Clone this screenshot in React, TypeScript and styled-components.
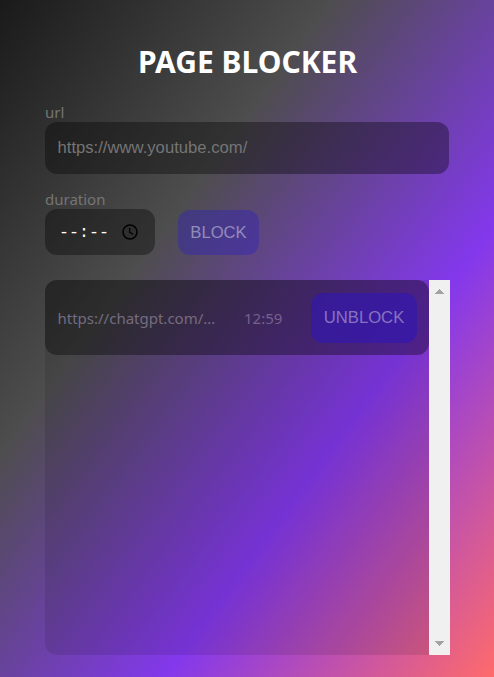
import React from "react";
import styled, { createGlobalStyle } from "styled-components";

const GlobalStyle = createGlobalStyle`
  * { box-sizing: border-box; }
  body { margin: 0; font-family: "Noto Sans", sans-serif; font-size: 15px; }
`;

const Page = styled.main`
  width: 494px;
  height: 677px;
  padding: 40px 44px 22px 45px;
  display: flex;
  flex-direction: column;
  overflow: hidden;
  background: linear-gradient(to bottom right, #1a1a1a, #4d4d4d, #8338ec, #ff6b6b);
`;

const Title = styled.h1`
  margin: 0;
  height: 62px;
  color: #fff;
  font-size: 30px;
  line-height: 44px;
  font-weight: 700;
  text-align: center;
`;

const Label = styled.label`
  display: block;
  height: 20px;
  line-height: 20px;
  color: #757575;
`;

const UrlInput = styled.input`
  display: block;
  width: 404px;
  height: 52px;
  flex: none;
  padding: 0 12.5px;
  border: 0;
  border-radius: 12px;
  outline: 0;
  background: rgba(0, 0, 0, 0.35);
  color: #fff;
  font: 16.67px "Liberation Sans", sans-serif;
  &::placeholder { color: #757575; opacity: 1; }
`;

const DurationRow = styled.div`
  display: flex;
  align-items: flex-end;
  gap: 23px;
  margin-top: 15px;
`;

const TimeField = styled.div`
  display: flex;
  align-items: center;
  justify-content: space-between;
  width: 110px;
  height: 46px;
  padding: 0 17px 0 14px;
  border-radius: 12px;
  background: rgba(0, 0, 0, 0.35);
  color: #fff;
  font: 16.67px/20px "Liberation Mono", monospace;
`;

const TimeText = styled.span`
  padding-top: 2px;
`;

const Button = styled.button<{ $w: number; $h: number; $strong?: boolean }>`
  flex: none;
  width: ${(p) => p.$w}px;
  height: ${(p) => p.$h}px;
  padding: 0;
  border: 0;
  border-radius: 12px;
  background: ${(p) => (p.$strong ? "rgba(48, 22, 182, 0.6)" : "rgba(47, 33, 190, 0.4)")};
  color: ${(p) => (p.$strong ? "#8872c0" : "#938bb9")};
  font: 16.67px "Liberation Sans", sans-serif;
`;

const ListPanel = styled.section`
  display: flex;
  width: 405px;
  height: 375px;
  margin-top: 25px;
  flex: none;
  border-radius: 12px 0 0 12px;
  background: rgba(0, 0, 0, 0.1);
`;

const List = styled.ul`
  flex: 1;
  margin: 0;
  padding: 0;
  list-style: none;
`;

const Item = styled.li`
  display: flex;
  align-items: center;
  height: 75px;
  padding: 0 12px 0 12.5px;
  border-radius: 12px;
  background: rgba(0, 0, 0, 0.35);
  color: #756c80;
`;

const Address = styled.span`
  width: 186.5px;
`;

const Remaining = styled.span`
  flex: 1;
  color: #76608d;
`;

const Scrollbar = styled.div`
  display: flex;
  flex-direction: column;
  align-items: center;
  justify-content: space-between;
  width: 21px;
  padding: 9px 0;
  background: #f0f0f0;
`;

const Arrow = ({ down }: { down?: boolean }) => (
  <svg width="9" height="5" viewBox="0 0 9 5" fill="#a3a3a3" shapeRendering="crispEdges">
    <path d={down ? "M0 0h9L4.5 5z" : "M0 5h9L4.5 0z"} />
  </svg>
);

const Clock = () => (
  <svg width="16" height="16" viewBox="0 0 16 16" fill="none" stroke="#000" strokeWidth="1.5">
    <circle cx="8" cy="8" r="7" />
    <path d="M7.7 3.8v4.5l3.6 2.2" strokeWidth="1.2" />
  </svg>
);

export default function App() {
  return (
    <>
      <GlobalStyle />
      <Page>
        <Title>PAGE BLOCKER</Title>
        <Label htmlFor="url">url</Label>
        <UrlInput id="url" placeholder="https://www.youtube.com/" />
        <DurationRow>
          <div>
            <Label>duration</Label>
            <TimeField>
              <TimeText>--:--</TimeText>
              <Clock />
            </TimeField>
          </div>
          <Button $w={81} $h={45}>BLOCK</Button>
        </DurationRow>
        <ListPanel>
          <List>
            <Item>
              <Address>https://chatgpt.com/...</Address>
              <Remaining>12:59</Remaining>
              <Button $w={106} $h={50} $strong>UNBLOCK</Button>
            </Item>
          </List>
          <Scrollbar>
            <Arrow />
            <Arrow down />
          </Scrollbar>
        </ListPanel>
      </Page>
    </>
  );
}
